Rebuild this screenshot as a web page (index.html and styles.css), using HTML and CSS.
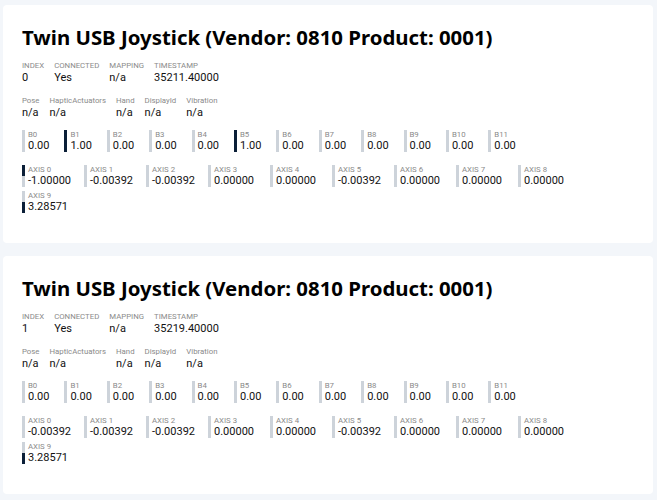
FILE: index.html
```html
<!DOCTYPE html>
<html>
<head>
<meta charset="utf-8">
<link rel="stylesheet" href="styles.css">
</head>
<body>
<div class="page">
  <section class="card">
    <h1 class="title">Twin USB Joystick (Vendor: 0810 Product: 0001)</h1>
    <div class="fields">
      <div class="field"><span class="lbl">INDEX</span><span class="val">0</span></div>
      <div class="field"><span class="lbl">CONNECTED</span><span class="val">Yes</span></div>
      <div class="field"><span class="lbl">MAPPING</span><span class="val">n/a</span></div>
      <div class="field"><span class="lbl">TIMESTAMP</span><span class="val">35211.40000</span></div>
    </div>
    <div class="fields">
      <div class="field"><span class="lbl">Pose</span><span class="val">n/a</span></div>
      <div class="field"><span class="lbl">HapticActuators</span><span class="val">n/a</span></div>
      <div class="field"><span class="lbl">Hand</span><span class="val">n/a</span></div>
      <div class="field"><span class="lbl">DisplayId</span><span class="val">n/a</span></div>
      <div class="field"><span class="lbl">Vibration</span><span class="val">n/a</span></div>
    </div>
    <div class="buttons">
      <div class="btn"><span class="lbl">B0</span><span class="val">0.00</span></div>
      <div class="btn on"><span class="lbl">B1</span><span class="val">1.00</span></div>
      <div class="btn"><span class="lbl">B2</span><span class="val">0.00</span></div>
      <div class="btn"><span class="lbl">B3</span><span class="val">0.00</span></div>
      <div class="btn"><span class="lbl">B4</span><span class="val">0.00</span></div>
      <div class="btn on"><span class="lbl">B5</span><span class="val">1.00</span></div>
      <div class="btn"><span class="lbl">B6</span><span class="val">0.00</span></div>
      <div class="btn"><span class="lbl">B7</span><span class="val">0.00</span></div>
      <div class="btn"><span class="lbl">B8</span><span class="val">0.00</span></div>
      <div class="btn"><span class="lbl">B9</span><span class="val">0.00</span></div>
      <div class="btn"><span class="lbl">B10</span><span class="val">0.00</span></div>
      <div class="btn"><span class="lbl">B11</span><span class="val">0.00</span></div>
    </div>
    <div class="axes">
      <div class="axis neg"><span class="lbl">AXIS 0</span><span class="val">-1.00000</span></div>
      <div class="axis"><span class="lbl">AXIS 1</span><span class="val">-0.00392</span></div>
      <div class="axis"><span class="lbl">AXIS 2</span><span class="val">-0.00392</span></div>
      <div class="axis"><span class="lbl">AXIS 3</span><span class="val">0.00000</span></div>
      <div class="axis"><span class="lbl">AXIS 4</span><span class="val">0.00000</span></div>
      <div class="axis"><span class="lbl">AXIS 5</span><span class="val">-0.00392</span></div>
      <div class="axis"><span class="lbl">AXIS 6</span><span class="val">0.00000</span></div>
      <div class="axis"><span class="lbl">AXIS 7</span><span class="val">0.00000</span></div>
      <div class="axis"><span class="lbl">AXIS 8</span><span class="val">0.00000</span></div>
      <div class="axis pos"><span class="lbl">AXIS 9</span><span class="val">3.28571</span></div>
    </div>
  </section>
  <section class="card">
    <h1 class="title">Twin USB Joystick (Vendor: 0810 Product: 0001)</h1>
    <div class="fields">
      <div class="field"><span class="lbl">INDEX</span><span class="val">1</span></div>
      <div class="field"><span class="lbl">CONNECTED</span><span class="val">Yes</span></div>
      <div class="field"><span class="lbl">MAPPING</span><span class="val">n/a</span></div>
      <div class="field"><span class="lbl">TIMESTAMP</span><span class="val">35219.40000</span></div>
    </div>
    <div class="fields">
      <div class="field"><span class="lbl">Pose</span><span class="val">n/a</span></div>
      <div class="field"><span class="lbl">HapticActuators</span><span class="val">n/a</span></div>
      <div class="field"><span class="lbl">Hand</span><span class="val">n/a</span></div>
      <div class="field"><span class="lbl">DisplayId</span><span class="val">n/a</span></div>
      <div class="field"><span class="lbl">Vibration</span><span class="val">n/a</span></div>
    </div>
    <div class="buttons">
      <div class="btn"><span class="lbl">B0</span><span class="val">0.00</span></div>
      <div class="btn"><span class="lbl">B1</span><span class="val">0.00</span></div>
      <div class="btn"><span class="lbl">B2</span><span class="val">0.00</span></div>
      <div class="btn"><span class="lbl">B3</span><span class="val">0.00</span></div>
      <div class="btn"><span class="lbl">B4</span><span class="val">0.00</span></div>
      <div class="btn"><span class="lbl">B5</span><span class="val">0.00</span></div>
      <div class="btn"><span class="lbl">B6</span><span class="val">0.00</span></div>
      <div class="btn"><span class="lbl">B7</span><span class="val">0.00</span></div>
      <div class="btn"><span class="lbl">B8</span><span class="val">0.00</span></div>
      <div class="btn"><span class="lbl">B9</span><span class="val">0.00</span></div>
      <div class="btn"><span class="lbl">B10</span><span class="val">0.00</span></div>
      <div class="btn"><span class="lbl">B11</span><span class="val">0.00</span></div>
    </div>
    <div class="axes">
      <div class="axis"><span class="lbl">AXIS 0</span><span class="val">-0.00392</span></div>
      <div class="axis"><span class="lbl">AXIS 1</span><span class="val">-0.00392</span></div>
      <div class="axis"><span class="lbl">AXIS 2</span><span class="val">-0.00392</span></div>
      <div class="axis"><span class="lbl">AXIS 3</span><span class="val">0.00000</span></div>
      <div class="axis"><span class="lbl">AXIS 4</span><span class="val">0.00000</span></div>
      <div class="axis"><span class="lbl">AXIS 5</span><span class="val">-0.00392</span></div>
      <div class="axis"><span class="lbl">AXIS 6</span><span class="val">0.00000</span></div>
      <div class="axis"><span class="lbl">AXIS 7</span><span class="val">0.00000</span></div>
      <div class="axis"><span class="lbl">AXIS 8</span><span class="val">0.00000</span></div>
      <div class="axis pos"><span class="lbl">AXIS 9</span><span class="val">3.28571</span></div>
    </div>
  </section>
</div>
</body>
</html>
```
FILE: styles.css
```css
html, body {
  margin: 0;
  padding: 0;
  background: #f3f6fa;
  font-family: "Noto Sans", "Open Sans", sans-serif;
  color: #111;
}
.page {
  display: flex;
  flex-direction: column;
  gap: 13px;
  padding: 5px 4px 0 3px;
}
.card {
  background: #fff;
  border-radius: 4px;
  height: 238px;
  box-sizing: border-box;
  padding: 18px 19px 0 19px;
}
.title {
  margin: 0 0 10px 0;
  font-size: 20.4px;
  line-height: 28px;
  font-weight: 700;
  color: #000;
}
.fields {
  display: flex;
  gap: 10px;
  margin-bottom: 12px;
}
.field {
  display: flex;
  flex-direction: column;
}
.lbl {
  font-family: Roboto, "Noto Sans", sans-serif;
  font-size: 7.8px;
  line-height: 10px;
  color: #8a8a8a;
}
.val {
  font-family: Roboto, "Noto Sans", sans-serif;
  font-size: 11px;
  line-height: 12px;
  color: #111;
}
.fields .val {
  line-height: 13px;
}
.buttons {
  display: flex;
  margin-top: -1px;
  margin-bottom: 13px;
}
.btn {
  box-sizing: border-box;
  width: 42.4px;
  border-left: 3px solid #cdd3da;
  padding-left: 3px;
  display: flex;
  flex-direction: column;
}
.btn.on {
  border-left-color: #0b1f38;
}
.axes {
  display: flex;
  flex-wrap: wrap;
  row-gap: 4px;
}
.axis {
  box-sizing: border-box;
  width: 62px;
  padding-left: 6px;
  display: flex;
  flex-direction: column;
  background: linear-gradient(#cdd3da, #cdd3da) left top / 3px 100% no-repeat;
}
.axis.neg {
  background: linear-gradient(#0b1f38 0 50%, #cdd3da 50% 100%) left top / 3px 100% no-repeat;
}
.axis.pos {
  background: linear-gradient(#cdd3da 0 50%, #0b1f38 50% 100%) left top / 3px 100% no-repeat;
}
```
